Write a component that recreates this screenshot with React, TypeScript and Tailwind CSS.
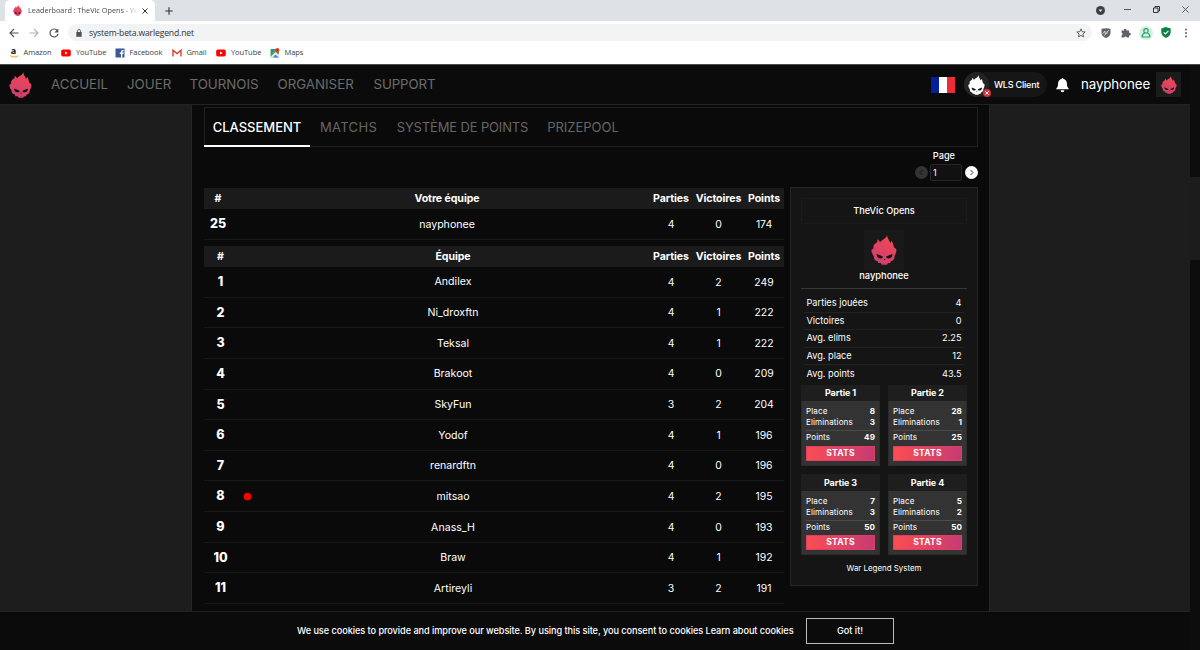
import { useState } from "react";
import type { ReactNode } from "react";

const teams = [
  { rank: 1, name: "Andilex", games: 4, wins: 2, points: 249 },
  { rank: 2, name: "Ni_droxftn", games: 4, wins: 1, points: 222 },
  { rank: 3, name: "Teksal", games: 4, wins: 1, points: 222 },
  { rank: 4, name: "Brakoot", games: 4, wins: 0, points: 209 },
  { rank: 5, name: "SkyFun", games: 3, wins: 2, points: 204 },
  { rank: 6, name: "Yodof", games: 4, wins: 1, points: 196 },
  { rank: 7, name: "renardftn", games: 4, wins: 0, points: 196 },
  { rank: 8, name: "mitsao", games: 4, wins: 2, points: 195, live: true },
  { rank: 9, name: "Anass_H", games: 4, wins: 0, points: 193 },
  { rank: 10, name: "Braw", games: 4, wins: 1, points: 192 },
  { rank: 11, name: "Artireyli", games: 3, wins: 2, points: 191 },
];

const stats = [
  ["Parties jouées", "4"],
  ["Victoires", "0"],
  ["Avg. elims", "2.25"],
  ["Avg. place", "12"],
  ["Avg. points", "43.5"],
];

const games = [
  { title: "Partie 1", place: 8, elims: 3, points: 49 },
  { title: "Partie 2", place: 28, elims: 1, points: 25 },
  { title: "Partie 3", place: 7, elims: 3, points: 50 },
  { title: "Partie 4", place: 5, elims: 2, points: 50 },
];

const tabs = [
  { label: "CLASSEMENT", width: "w-[106px]" },
  { label: "MATCHS", width: "w-[77px] tracking-[0.350px]" },
  { label: "SYSTÈME DE POINTS", width: "w-[151px] tracking-[-0.150px]" },
  { label: "PRIZEPOOL", width: "w-[90px]" },
];

function Skull({ className, white }: { className?: string; white?: boolean }) {
  return (
    <svg viewBox="32 28 72 92" className={className} preserveAspectRatio="none">
      <defs>
        <linearGradient id="flame" x1="0.7" y1="0" x2="0.3" y2="1">
          <stop offset="0" stopColor="#f04a53" />
          <stop offset="1" stopColor="#cf3d70" />
        </linearGradient>
      </defs>
      <path
        fill={white ? "#fff" : "url(#flame)"}
        d="M77 29C76 37 83 43 85 53L89 46C94 53 93 59 96 66L102 71C103 80 100 87 97 92C98 100 94 107 87 108L85 115L79 114L76 119H62L59 114L52 114L50 108C43 107 39 101 40 93C36 88 33 80 33 74L39 69C37 59 42 54 49 50C50 46 50 44 50 41C54 44 56 47 57 51C62 42 72 42 77 29Z"
      />
      <path
        fill="#121212"
        d="M48 86L65 94C65 99 60 101 55 99C50 97 47 93 48 86ZM91 86L74 94C74 99 79 101 84 99C89 97 92 93 91 86ZM69.500 101L72 105H67Z"
      />
    </svg>
  );
}

function YouTubeIcon() {
  return (
    <svg viewBox="0 0 10 10" className="size-2.5">
      <rect x="0.200" y="1.600" width="9.600" height="6.800" rx="1.600" fill="#f00" />
      <path d="M4 3.400v3.200L6.700 5z" fill="#fff" />
    </svg>
  );
}

function AmazonIcon() {
  return (
    <div className="flex size-2.5 flex-col items-center">
      <span className="h-[7px] text-[9px] leading-[5px] font-bold text-[#111]">a</span>
      <svg viewBox="0 0 10 3" className="h-[3px] w-2.5">
        <path d="M1 0.500C3.500 2.500 6.500 2.500 9 0.700" stroke="#f90" strokeWidth="0.900" fill="none" />
      </svg>
    </div>
  );
}

function FacebookIcon() {
  return (
    <svg viewBox="0 0 10 10" className="size-2.5">
      <path d="M0.500 0.500h9v9h-9z" fill="#3b5998" />
      <path d="M6 9.500V6h-1.200V4.600H6V3.700C6 2.500 6.700 2 7.700 2h1v1.300H8c-.5 0-.7.200-.7.700v.6h1.400L8.500 6H7.300v3.500z" fill="#fff" />
    </svg>
  );
}

function GmailIcon() {
  return (
    <svg viewBox="0 0 10 10" className="size-2.5">
      <path d="M1 8.500V2.200L5 5.600 9 2.200V8.500" fill="none" stroke="#d93c30" strokeWidth="1.400" />
    </svg>
  );
}

function MapsIcon() {
  return (
    <svg viewBox="0 0 10 10" className="size-2.5">
      <rect x="0.500" y="1" width="8.500" height="8.500" rx="1" fill="#34a853" />
      <path d="M0.500 8.800L6 3.500 9 6.500V9.500H1.500z" fill="#e8eaed" />
      <path d="M5.200 6.500L9 9.500H3z" fill="#4285f4" />
      <path d="M1 1h4L1 5z" fill="#3c78d8" />
      <path d="M7.300 0a2.200 2.200 0 0 1 2.200 2.200c0 1.500-1.700 2-2.200 4-.5-2-2.200-2.500-2.200-4A2.200 2.200 0 0 1 7.300 0z" fill="#ea4335" />
      <circle cx="7.300" cy="2.200" r="0.800" fill="#8b1d15" />
    </svg>
  );
}

const bookmarks: { label: string; icon: ReactNode; width: string }[] = [
  { label: "Amazon", icon: <AmazonIcon />, width: "w-[52.500px]" },
  { label: "YouTube", icon: <YouTubeIcon />, width: "w-[53.500px]" },
  { label: "Facebook", icon: <FacebookIcon />, width: "w-[57px]" },
  { label: "Gmail", icon: <GmailIcon />, width: "w-[44.500px]" },
  { label: "YouTube", icon: <YouTubeIcon />, width: "w-[53.500px]" },
  { label: "Maps", icon: <MapsIcon />, width: "w-[50px]" },
];

function BrowserChrome() {
  return (
    <div className="h-[65px] border-b border-[#4a4a4a] bg-white font-['Open_Sans','Noto_Sans',sans-serif] text-[#3c4043]">
      <div className="flex h-[21px] items-center bg-[#dee1e6]">
        <div className="ml-[5px] flex h-[21px] w-[150px] items-center rounded-t-[5px] bg-white pl-2">
          <Skull className="h-[11px] w-[9px]" />
          <span className="ml-[6px] w-[110px] bg-linear-to-r from-[#3c4043] from-85% to-transparent bg-clip-text text-[7.300px] whitespace-nowrap text-transparent">
            Leaderboard : TheVic Opens - W
          </span>
          <svg viewBox="0 0 6 6" className="ml-[4px] size-[6px]">
            <path d="M0.500 0.500l5 5M5.500 0.500l-5 5" stroke="#333" strokeWidth="1" />
          </svg>
        </div>
        <svg viewBox="0 0 8 8" className="ml-[10px] size-2">
          <path d="M4 0.300v7.400M0.300 4h7.400" stroke="#333" strokeWidth="1.100" />
        </svg>
        <div className="ml-auto flex items-center pr-[11px]">
          <svg viewBox="0 0 10 10" className="mr-[19px] size-[9px]">
            <circle cx="5" cy="5" r="5" fill="#3c4043" />
            <path d="M2.800 3.800h4.400L5 6.800z" fill="#dee1e6" />
          </svg>
          <svg viewBox="0 0 7 7" className="mr-[22px] mb-[3px] size-[7px]">
            <path d="M0 3.500h7" stroke="#333" strokeWidth="0.800" />
          </svg>
          <svg viewBox="0 0 7 7" className="mr-[22px] mb-[3px] size-[7px]">
            <path d="M0.500 2h4.500v4.500H0.500zM2 2V0.500h4.500V5H5" fill="none" stroke="#222" strokeWidth="0.900" />
          </svg>
          <svg viewBox="0 0 7 7" className="mb-[3px] size-[7px]">
            <path d="M0.300 0.300l6.400 6.400M6.700 0.300L0.300 6.700" stroke="#333" strokeWidth="0.700" />
          </svg>
        </div>
      </div>

      <div className="flex h-[23px] items-center">
        <svg viewBox="0 0 10 10" className="ml-[9px] size-[10px]">
          <path d="M9.500 5H1M5 1L1 5l4 4" fill="none" stroke="#4f5357" strokeWidth="1.100" />
        </svg>
        <svg viewBox="0 0 10 10" className="ml-[10px] size-[10px]">
          <path d="M0.500 5H9M5 1l4 4-4 4" fill="none" stroke="#b0b3b6" strokeWidth="1.100" />
        </svg>
        <svg viewBox="0 0 10 10" className="ml-[10px] size-[10px]">
          <path d="M8.300 2.600A4 4 0 1 0 9 5.800" fill="none" stroke="#4f5357" strokeWidth="1.200" />
          <path d="M9.300 0.400v4H5.300z" fill="#4f5357" />
        </svg>
        <div className="ml-[9px] flex h-[17px] w-[1024px] items-center rounded-full bg-[#f1f3f4] pr-[6px] pl-2">
          <svg viewBox="0 0 6 8" className="h-2 w-[6px]">
            <path d="M0.300 3h5.400v4.800H0.300z" fill="#4f5357" />
            <path d="M1.500 3.200V2a1.500 1.500 0 0 1 3 0v1.200" fill="none" stroke="#4f5357" strokeWidth="0.800" />
          </svg>
          <span className="mt-px ml-[7px] text-[8.600px] tracking-[-0.150px] text-[#303134]">system-beta.warlegend.net</span>
          <svg viewBox="0 0 10 10" className="ml-auto size-[10px]">
            <path d="M5 0.900l1.200 2.800 3 .3-2.300 2 .7 2.900L5 7.400 2.400 8.900l.7-2.900-2.300-2 3-.3z" fill="none" stroke="#4f5357" strokeWidth="0.900" />
          </svg>
        </div>
        <svg viewBox="0 0 10 10" className="ml-[9px] size-[10px]">
          <path d="M0.500 0.800Q5-0.500 9.500 0.800V5Q9.200 8.500 5 10 .8 8.500.5 5z" fill="#5f6368" />
          <path d="M1.500 6l2.500-3v2.500L8.300 2M3 7.500l4-3" stroke="#dfe1e3" strokeWidth="0.800" fill="none" />
        </svg>
        <svg viewBox="0 0 10 10" className="ml-[10px] size-[10px]">
          <path d="M0.600 2.500h2.300a1.400 1.400 0 1 1 2.700 0H8v2.300a1.400 1.400 0 1 1 0 2.700v2H5.800a1.400 1.400 0 0 0-2.700 0H0.600V7.200a1.300 1.300 0 0 0 0-2.500z" fill="#5f6368" />
        </svg>
        <svg viewBox="0 0 14 14" className="ml-[8px] size-[14px]">
          <circle cx="7" cy="7" r="7" fill="#d9eee3" />
          <circle cx="7" cy="4.800" r="2.200" fill="none" stroke="#1fab66" strokeWidth="1.200" />
          <path d="M5.700 7C3.500 7.800 3 9 3.200 11h7.600c.2-2-.3-3.200-2.500-4" fill="none" stroke="#1fab66" strokeWidth="1.200" />
        </svg>
        <svg viewBox="0 0 10 11" className="ml-[8px] h-[11px] w-[10px]">
          <path d="M5 0l4.700 1.500V5C9.700 8 7.500 10 5 11 2.500 10 .3 8 .3 5V1.500z" fill="#0b8043" />
          <path d="M2.700 5.300l1.700 1.700 3-3.200" stroke="#fff" strokeWidth="1.200" fill="none" />
        </svg>
        <svg viewBox="0 0 4 10" className="ml-[13px] h-[10px] w-1 fill-[#4f5357]">
          <circle cx="2" cy="1.500" r="0.900" />
          <circle cx="2" cy="5" r="0.900" />
          <circle cx="2" cy="8.500" r="0.900" />
        </svg>
      </div>

      <div className="flex h-[17px] items-center pl-[8.500px] text-[7.500px] tracking-[-0.080px]">
        {bookmarks.map((b, i) => (
          <div key={i} className={`flex shrink-0 items-center gap-[5px] whitespace-nowrap ${b.width}`}>
            {b.icon}
            <span>{b.label}</span>
          </div>
        ))}
      </div>
    </div>
  );
}

function Header() {
  return (
    <header className="flex h-10 shrink-0 items-center border-b border-[#222] bg-[#0b0b0b] text-white">
      <Skull className="ml-[9px] h-[26px] w-[23px]" />
      <nav className="mt-px ml-[19px] flex gap-[19px] text-[13.300px] text-[#6c6c6c]">
        <span className="w-[57px]">ACCUEIL</span>
        <span className="w-[43.500px]">JOUER</span>
        <span className="w-[69px]">TOURNOIS</span>
        <span className="w-[77px]">ORGANISER</span>
        <span className="tracking-[-0.100px]">SUPPORT</span>
      </nav>
      <div className="ml-auto flex items-center pr-[9px]">
        <div className="flex h-4 w-6">
          <span className="flex-1 bg-[#00209f]" />
          <span className="flex-1 bg-white" />
          <span className="flex-1 bg-[#ef2b3a]" />
        </div>
        <div className="ml-[9px] flex h-[25px] w-[83px] items-center rounded-full bg-[#161616]">
          <div className="relative flex size-[25px] items-center justify-center rounded-full bg-[#242424]">
            <Skull white className="h-[20px] w-[17px]" />
            <svg viewBox="0 0 8 8" className="absolute -right-[2px] bottom-0 size-2">
              <circle cx="4" cy="4" r="4" fill="#d3343c" />
              <path d="M2.300 2.300l3.400 3.400M5.700 2.300L2.300 5.700" stroke="#fff" strokeWidth="1" />
            </svg>
          </div>
          <span className="ml-[5px] text-[9.100px] font-medium tracking-[-0.250px] whitespace-nowrap">WLS Client</span>
        </div>
        <svg viewBox="0 0 14 16" className="ml-[9px] h-4 w-[13px] fill-white">
          <path d="M7 0.500a1 1 0 0 1 1 1C10.500 2 11.800 4 11.800 6.500c0 3 .7 4.300 1.900 5.300v.9H.3v-.9c1.200-1 1.900-2.300 1.900-5.300C2.200 4 3.500 2 6 1.500a1 1 0 0 1 1-1zM5 13.700h4a2 2 0 0 1-4 0z" />
        </svg>
        <span className="ml-3 w-[69px] text-[13.300px] tracking-[-0.100px]">nayphonee</span>
        <div className="ml-[6px] flex size-[25px] items-center justify-center bg-[#1b1b1b]">
          <Skull className="h-[18px] w-4" />
        </div>
      </div>
    </header>
  );
}

function TableHead({ team, className }: { team: string; className: string }) {
  return (
    <div className={`grid h-[21px] items-center bg-[#1b1b1b] text-center text-[10.600px] font-bold tracking-[-0.080px] whitespace-nowrap ${className}`}>
      <span>#</span>
      <span />
      <span>{team}</span>
      <span>Parties</span>
      <span>Victoires</span>
      <span>Points</span>
    </div>
  );
}

function TableRow({ rank, name, games, wins, points, live, className }: {
  rank: number;
  name: string;
  games: number;
  wins: number;
  points: number;
  live?: boolean;
  className: string;
}) {
  return (
    <div className={`grid items-center border-b border-[#181818] pt-px text-center text-[10.400px] ${className}`}>
      <span className="text-[12.500px] font-extrabold">{rank}</span>
      <span className="flex justify-center">
        {live && <i className="size-[7px] rounded-full bg-[#f00] shadow-[0_0_2px_#f00]" />}
      </span>
      <span className="text-[10.600px]">{name}</span>
      <span>{games}</span>
      <span>{wins}</span>
      <span>{points}</span>
    </div>
  );
}

function GameCard({ title, place, elims, points }: (typeof games)[number]) {
  return (
    <div className="h-[81px] border border-t-0 border-[#2b2b2b] bg-[#333] text-[8.100px] tracking-[0.100px]">
      <div className="-mx-px flex h-[16.500px] items-center justify-center bg-[#1e1e1e] text-[9px] font-bold tracking-[-0.100px]">{title}</div>
      <div className="px-[4px] pt-[5px] leading-[11px]">
        <div className="flex justify-between"><span>Place</span><b>{place}</b></div>
        <div className="flex justify-between"><span>Eliminations</span><b>{elims}</b></div>
        <div className="mt-[2px] flex justify-between border-t border-[#4a4a4a] pt-[1px]"><span>Points</span><b>{points}</b></div>
        <button className="mt-[2.500px] block h-[15px] w-full border border-[#e03d63] bg-linear-to-r from-[#fa4d51] to-[#c63b72] text-[8.600px] leading-[13px] font-bold tracking-[0.200px]">
          STATS
        </button>
      </div>
    </div>
  );
}

function Sidebar() {
  return (
    <aside className="h-[399px] w-[188px] border border-[#262626] bg-[#151515] px-[10px] pt-[10px]">
      <div className="flex h-[26px] items-center justify-center border border-[#1a1a1a] text-[9.200px] font-medium">TheVic Opens</div>
      <div className="mx-auto mt-[6px] flex size-10 items-center justify-center bg-[#191919]">
        <Skull className="h-[30px] w-[26px]" />
      </div>
      <div className="h-[19px] border-b border-[#383838] text-center text-[9.300px] leading-[11px] font-medium">nayphonee</div>
      <div className="mx-[3px] mt-[6px]">
        {stats.map(([label, value]) => (
          <div key={label} className="flex h-[17.500px] items-center justify-between border-b border-[#222] px-[2.500px] text-[9.200px] last:border-0">
            <span>{label}</span>
            <span>{value}</span>
          </div>
        ))}
      </div>
      <div className="mt-[2px] grid grid-cols-2 gap-x-2 gap-y-[8.500px]">
        {games.map((g) => (
          <GameCard key={g.title} {...g} />
        ))}
      </div>
      <div className="mt-[8px] text-center text-[7.900px] leading-[11px]">War Legend System</div>
    </aside>
  );
}

export default function App() {
  const [page, setPage] = useState("1");
  const [active, setActive] = useState("CLASSEMENT");

  return (
    <div className="h-[650px] w-[1200px] overflow-hidden bg-[#0b0b0b]">
      <BrowserChrome />
      <div className="flex h-[585px] font-[Inter,'Open_Sans',sans-serif] text-white">
        <div className="flex w-[1190px] flex-col">
          <Header />
          <main className="h-[506px] shrink-0 bg-[#1d1d1d]">
            <div className="ml-[191px] h-full w-[799px] border-x border-[#262626] bg-[#0a0a0a] pt-0.5 pr-[11px] pl-3">
              <div className="flex h-10 border border-[#202020]">
                {tabs.map((t) => (
                  <button
                    key={t.label}
                    onClick={() => setActive(t.label)}
                    className={`flex h-[39px] items-center justify-center border-b-2 pt-0.5 text-[13px] whitespace-nowrap first:-ml-px ${t.width} ${
                      active === t.label ? "border-white font-medium text-white" : "border-transparent text-[#666]"
                    }`}
                  >
                    {t.label}
                  </button>
                ))}
              </div>
              <div className="flex h-10 flex-col items-end">
                <span className="mt-[3px] mr-[23px] text-[9.200px] leading-3 font-medium">Page</span>
                <div className="mt-[2px] flex items-center">
                  <button className="size-[13px] rounded-full bg-[#333]">
                    <svg viewBox="0 0 13 13"><path d="M7.500 4L5 6.500 7.500 9" fill="none" stroke="#111" /></svg>
                  </button>
                  <input
                    value={page}
                    onChange={(e) => setPage(e.target.value)}
                    className="mr-[3px] ml-[2px] h-[17px] w-[32px] rounded-[2px] border border-[#262626] bg-[#111] pl-[2px] text-[9px]"
                  />
                  <button className="size-[13px] rounded-full bg-white">
                    <svg viewBox="0 0 13 13"><path d="M5.500 4L8 6.500 5.500 9" fill="none" stroke="#333" /></svg>
                  </button>
                </div>
              </div>
              <div className="flex justify-between">
                <div className="w-[580px] pt-px">
                  <TableHead team="Votre équipe" className="grid-cols-[28px_13px_404px_44px_51px_40px]" />
                  <TableRow rank={25} name="nayphonee" games={4} wins={0} points={174} className="h-[31px] grid-cols-[28px_13px_404px_44px_51px_40px]" />
                  <div className="mt-[6px]">
                    <TableHead team="Équipe" className="grid-cols-[33px_20px_392px_44px_51px_40px]" />
                    {teams.map((t) => (
                      <TableRow key={t.rank} {...t} className="h-[30.650px] grid-cols-[33px_20px_392px_44px_51px_40px]" />
                    ))}
                  </div>
                </div>
                <Sidebar />
              </div>
            </div>
          </main>
          <footer className="flex h-[39px] shrink-0 items-center border-t border-[#222] bg-[#0b0b0b] pl-[297px] text-[9.200px] font-medium">
            <span className="w-[497px] tracking-[-0.068px] whitespace-nowrap">
              We use cookies to provide and improve our website. By using this site, you consent to cookies Learn about cookies
            </span>
            <button className="ml-3 h-[26px] w-[88px] border border-[#bbb]">Got it!</button>
          </footer>
        </div>
        <div className="w-[10px] bg-[#0d0d0d] pt-[112px]">
          <div className="h-[83px] bg-[#1c1c1c]" />
        </div>
      </div>
    </div>
  );
}
